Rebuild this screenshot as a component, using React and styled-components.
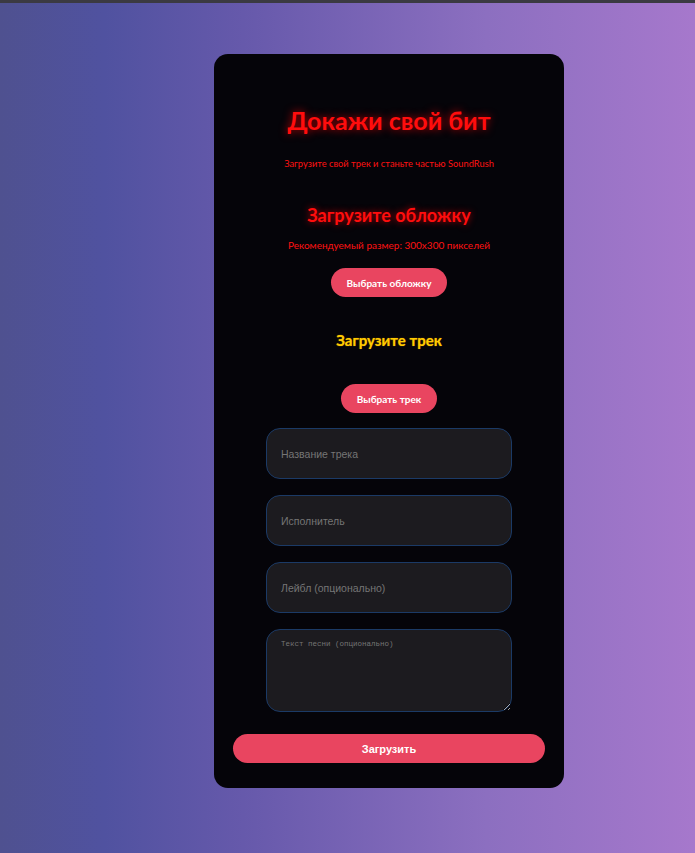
import React from 'react'
import styled, { createGlobalStyle } from 'styled-components'

const GlobalStyle = createGlobalStyle`
  html, body {
    margin: 0;
    padding: 0;
  }
  body {
    min-height: 853px;
    font-family: 'Lato', 'Liberation Sans', sans-serif;
    background: linear-gradient(
      to right,
      #4f5190 0%,
      #5052a0 15%,
      #6659ab 35%,
      #8c6fc0 70%,
      #a678cc 100%
    );
    border-top: 3px solid #3b3a42;
  }
`

const Page = styled.main`
  display: flex;
  justify-content: center;
  padding: 51px 0 66px 83px;
`

const Card = styled.section`
  width: 350px;
  box-sizing: border-box;
  padding: 48px 19px 25px;
  background: #050409;
  border-radius: 14px;
  display: flex;
  flex-direction: column;
  align-items: center;
`

const Title = styled.h1`
  margin: 0;
  font-size: 25px;
  line-height: 36px;
  font-weight: 700;
  color: #ff0d0d;
  text-shadow: 0 0 8px rgba(255, 0, 0, 0.75);
`

const Note = styled.p`
  margin: ${p => p.$top || 0}px 0 0;
  font-size: ${p => p.$size || 10}px;
  line-height: 14px;
  color: #ff1212;
`

const Heading = styled.h2`
  margin: ${p => p.$top}px 0 0;
  font-size: ${p => p.$size}px;
  line-height: 24px;
  font-weight: 700;
  color: ${p => p.$color};
  text-shadow: ${p => p.$glow};
`

const PillButton = styled.button`
  margin-top: ${p => p.$top}px;
  height: 29px;
  padding: 0 16px;
  border: none;
  border-radius: 15px;
  background: #e94560;
  color: #ffffff;
  font-family: 'Lato', 'Liberation Sans', sans-serif;
  font-size: 10px;
  font-weight: 700;
  cursor: pointer;
`

const Fields = styled.div`
  margin-top: 15px;
  width: 246px;
  display: flex;
  flex-direction: column;
  gap: 16px;
`

const Field = styled.input`
  height: 51px;
  box-sizing: border-box;
  padding: 0 14px;
  background: #1c1b1f;
  border: 1px solid #1b3a66;
  border-radius: 14px;
  color: #ddd;
  font-family: 'Liberation Sans', Arial, sans-serif;
  font-size: 10.5px;
  outline: none;

  ::placeholder {
    color: #7b7b80;
  }
`

const Lyrics = styled.textarea`
  height: 83px;
  box-sizing: border-box;
  padding: 10px 14px;
  background: #1c1b1f;
  border: 1px solid #1b3a66;
  border-radius: 14px;
  color: #ddd;
  font-family: 'Liberation Mono', monospace;
  font-size: 7.5px;
  outline: none;
  resize: vertical;

  ::placeholder {
    color: #6f6f74;
  }
`

const SubmitButton = styled.button`
  margin-top: 22px;
  width: 100%;
  height: 29px;
  border: none;
  border-radius: 15px;
  background: #e94560;
  color: #ffffff;
  font-family: 'Liberation Sans', Arial, sans-serif;
  font-size: 11px;
  font-weight: 700;
  cursor: pointer;
`

const redGlow = '0 0 7px rgba(255, 0, 0, 0.75)'

export default function App() {
  return (
    <>
      <GlobalStyle />
      <Page>
        <Card>
          <Title>Докажи свой бит</Title>
          <Note $top={19} $size={9.3}>
            Загрузите свой трек и станьте частью SoundRush
          </Note>
          <Heading $top={32} $size={18} $color="#ff0d0d" $glow={redGlow}>
            Загрузите обложку
          </Heading>
          <Note $top={11}>Рекомендуемый размер: 300x300 пикселей</Note>
          <PillButton $top={16}>Выбрать обложку</PillButton>
          <Heading $top={31} $size={15} $color="#ffcc00" $glow="0 0 1px #c08000">
            Загрузите трек
          </Heading>
          <PillButton $top={32}>Выбрать трек</PillButton>
          <Fields>
            <Field placeholder="Название трека" />
            <Field placeholder="Исполнитель" />
            <Field placeholder="Лейбл (опционально)" />
            <Lyrics placeholder="Текст песни (опционально)" />
          </Fields>
          <SubmitButton>Загрузить</SubmitButton>
        </Card>
      </Page>
    </>
  )
}
